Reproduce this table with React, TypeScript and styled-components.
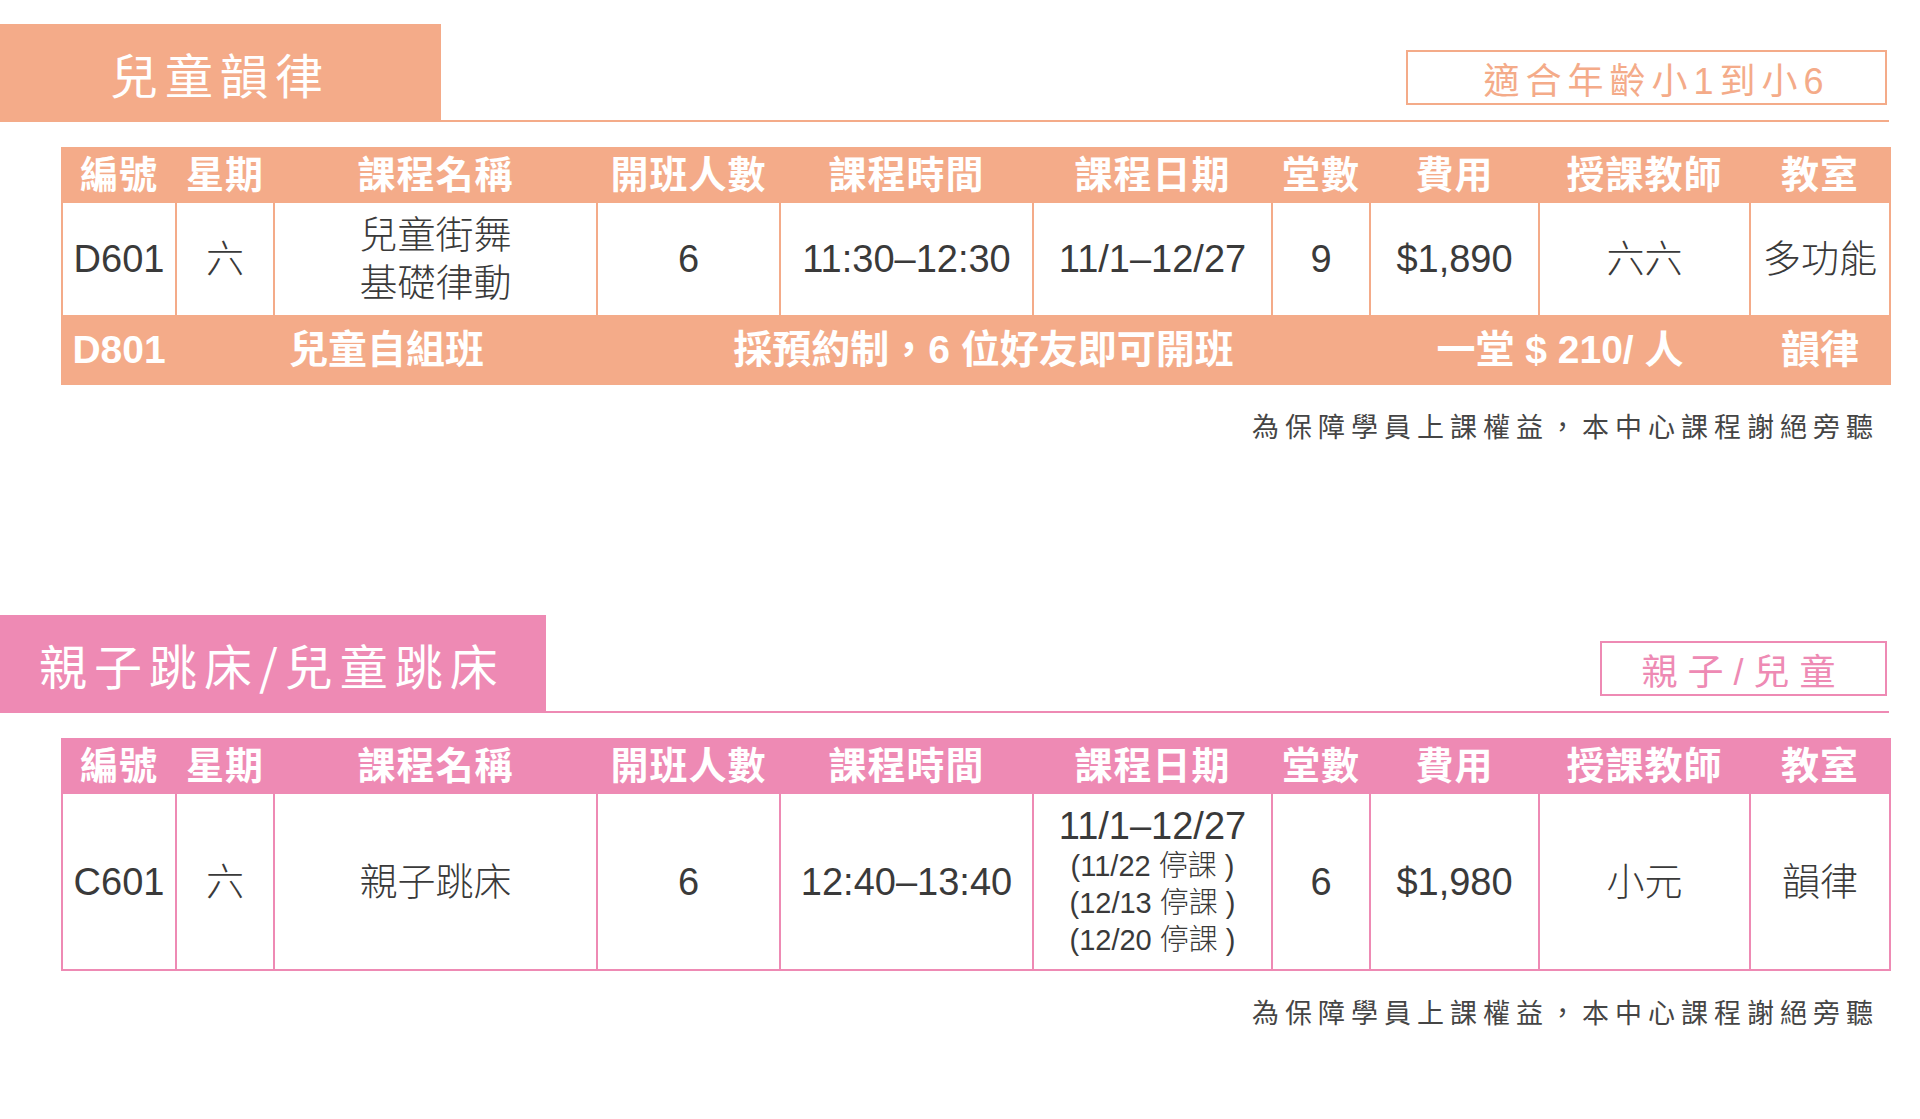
import React from "react";
import styled, { createGlobalStyle } from "styled-components";

const SALMON = "#F4AB89";
const PINK = "#EE8AB4";
const FONT = `"Liberation Sans", "Noto Sans CJK TC", sans-serif`;

type Footer = {
    cells: Array<{ text: string; span: number }>
}

type Course = {
    code: string
    day: string
    name: string[]
    size: string
    time: string
    date: string
    dateNotes: string[]
    count: string
    fee: string
    teacher: string
    room: string
}

type SectionType = {
    title: string
    titleWidth: number
    titlePad: number
    badge: string
    badgeWidth: number
    badgeIndent: number
    badgeSpacing: number
    color: string
    rowHeight: number
    course: Course
    footer?: Footer
}

const columns = [114, 98, 323, 183, 253, 239, 98, 169, 211, 140];
const headers = ["編號", "星期", "課程名稱", "開班人數", "課程時間", "課程日期", "堂數", "費用", "授課教師", "教室"];

const sections: SectionType[] = [
    {
        title: "兒童韻律",
        titleWidth: 441,
        titlePad: 110,
        badge: "適合年齡小1到小6",
        badgeWidth: 481,
        badgeIndent: 20,
        badgeSpacing: 6,
        color: SALMON,
        rowHeight: 114,
        course: {
            code: "D601",
            day: "六",
            name: ["兒童街舞", "基礎律動"],
            size: "6",
            time: "11:30–12:30",
            date: "11/1–12/27",
            dateNotes: [],
            count: "9",
            fee: "$1,890",
            teacher: "六六",
            room: "多功能",
        },
        footer: {
            cells: [
                {text: "D801", span: 1},
                {text: "兒童自組班", span: 2},
                {text: "採預約制，6 位好友即可開班", span: 4},
                {text: "一堂 $ 210/ 人", span: 2},
                {text: "韻律", span: 1},
            ]
        }
    },
    {
        title: "親子跳床/兒童跳床",
        titleWidth: 546,
        titlePad: 39,
        badge: "親子/兒童",
        badgeWidth: 287,
        badgeIndent: 0,
        badgeSpacing: 10,
        color: PINK,
        rowHeight: 177,
        course: {
            code: "C601",
            day: "六",
            name: ["親子跳床"],
            size: "6",
            time: "12:40–13:40",
            date: "11/1–12/27",
            dateNotes: ["(11/22 停課 )", "(12/13 停課 )", "(12/20 停課 )"],
            count: "6",
            fee: "$1,980",
            teacher: "小元",
            room: "韻律",
        },
    },
];

export default function App() {
    return (
        <>
            <GlobalStyle/>
            <Page>
                {sections.map(s => (
                    <Section key={s.title}>
                        <HeadRow>
                            <TitleBlock $color={s.color} $width={s.titleWidth} $pad={s.titlePad}>
                                {s.title}
                            </TitleBlock>
                            <Rule $color={s.color}>
                                <Badge $color={s.color} $width={s.badgeWidth} $indent={s.badgeIndent}
                                       $spacing={s.badgeSpacing}>
                                    {s.badge}
                                </Badge>
                            </Rule>
                        </HeadRow>

                        <Table $color={s.color}>
                            <colgroup>
                                {columns.map((w, i) => <col key={i} style={{width: w}}/>)}
                            </colgroup>
                            <thead>
                            <tr>
                                {headers.map(h => <HeadCell key={h}>{h}</HeadCell>)}
                            </tr>
                            </thead>
                            <tbody>
                            <DataRow $height={s.rowHeight}>
                                <Cell>{s.course.code}</Cell>
                                <Cell>{s.course.day}</Cell>
                                <Cell>{s.course.name.map(n => <Line key={n}>{n}</Line>)}</Cell>
                                <Cell>{s.course.size}</Cell>
                                <Cell>{s.course.time}</Cell>
                                <Cell>
                                    <DateMain>{s.course.date}</DateMain>
                                    {s.course.dateNotes.map(n => <DateNote key={n}>{n}</DateNote>)}
                                </Cell>
                                <Cell>{s.course.count}</Cell>
                                <Cell>{s.course.fee}</Cell>
                                <Cell>{s.course.teacher}</Cell>
                                <Cell>{s.course.room}</Cell>
                            </DataRow>
                            {s.footer &&
                                <tr>
                                    {s.footer.cells.map(c =>
                                        <FootCell key={c.text} colSpan={c.span}>{c.text}</FootCell>)}
                                </tr>
                            }
                            </tbody>
                        </Table>

                        <Note>為保障學員上課權益，本中心課程謝絕旁聽</Note>
                    </Section>
                ))}
            </Page>
        </>
    )
}

const GlobalStyle = createGlobalStyle`
  body {
    margin: 0;
    background: #fff;
    font-family: ${FONT};
    color: #3a3a3a;
  }
`

const Page = styled.div`
  display: flex;
  flex-direction: column;
  gap: 170px;
  padding-top: 24px;
  width: 1920px;
`

const Section = styled.section`
  display: flex;
  flex-direction: column;
`

const HeadRow = styled.div`
  display: flex;
  align-items: flex-end;
  width: 1889px;
`

const TitleBlock = styled.div<{ $color: string, $width: number, $pad: number }>`
  display: flex;
  align-items: center;
  box-sizing: border-box;
  width: ${p => p.$width}px;
  height: 98px;
  padding-left: ${p => p.$pad}px;
  background: ${p => p.$color};
  color: #fff;
  font-family: "Noto Sans CJK TC", sans-serif;
  font-size: 48px;
  letter-spacing: 7px;
  white-space: nowrap;
`

const Rule = styled.div<{ $color: string }>`
  flex: 1;
  display: flex;
  justify-content: flex-end;
  padding-bottom: 15px;
  border-bottom: 2px solid ${p => p.$color};
`

const Badge = styled.div<{ $color: string, $width: number, $indent: number, $spacing: number }>`
  display: flex;
  align-items: center;
  justify-content: center;
  box-sizing: border-box;
  width: ${p => p.$width}px;
  height: 55px;
  margin-right: 2px;
  padding-left: ${p => p.$indent}px;
  border: 2px solid ${p => p.$color};
  color: ${p => p.$color};
  font-size: 36px;
  letter-spacing: ${p => p.$spacing}px;
  white-space: nowrap;
`

const Table = styled.table<{ $color: string }>`
  margin: 25px 0 0 61px;
  width: 1828px;
  table-layout: fixed;
  border-collapse: collapse;

  th, td {
    border: 2px solid ${p => p.$color};
    padding: 0;
    text-align: center;
    vertical-align: middle;
    white-space: nowrap;
  }

  th, td[colspan] {
    background: ${p => p.$color};
  }
`

const HeadCell = styled.th`
  height: 46px;
  line-height: 44px;
  color: #fff;
  font-family: "Noto Sans CJK TC", sans-serif;
  font-size: 38px;
  font-weight: 700;
  letter-spacing: 1px;

  && {
    padding-bottom: 6px;
  }
`

const DataRow = styled.tr<{ $height: number }>`
  height: ${p => p.$height}px;
`

const Cell = styled.td`
  font-size: 38px;
  font-weight: 300;
  line-height: 48px;
  color: #3a3a3a;
`

const Line = styled.div`
  line-height: 48px;
`

const DateMain = styled.div`
  line-height: 44px;
`

const DateNote = styled.div`
  font-size: 29px;
  line-height: 37px;
`

const FootCell = styled.td`
  height: 66px;
  line-height: 48px;
  color: #fff;
  font-size: 39px;
  font-weight: 700;
`

const Note = styled.div`
  width: 1828px;
  margin: 26px 0 0 61px;
  box-sizing: border-box;
  padding-right: 10px;
  text-align: right;
  font-size: 27px;
  line-height: 34px;
  letter-spacing: 6px;
  color: #454545;
`
